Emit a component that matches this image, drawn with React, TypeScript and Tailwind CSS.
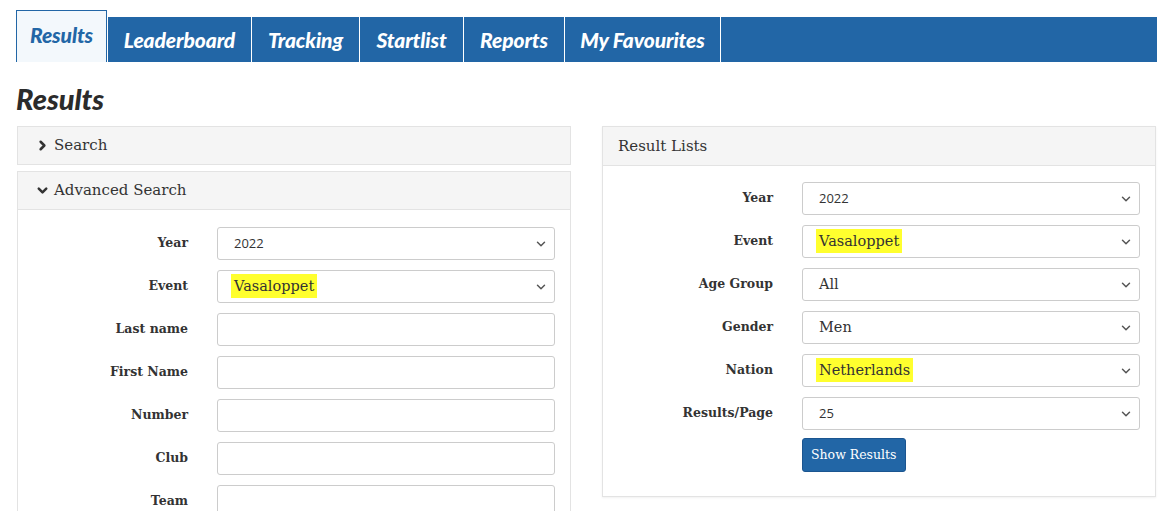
import { ChevronDown, ChevronRight } from "lucide-react";

const tabs = ["Results", "Leaderboard", "Tracking", "Startlist", "Reports", "My Favourites"];
const tabWidths = ["w-[91px]", "w-[145px]", "w-[108px]", "w-[104px]", "w-[101px]", "w-[156px]"];

const serif = { fontFamily: '"DejaVu Serif", "Liberation Serif", serif' };

function Mark({ children }: { children: React.ReactNode }) {
  return <span className="bg-[#ffff2e] px-[3px] py-[4px] -mx-[3px]">{children}</span>;
}

function Select({ value, sans }: { value: React.ReactNode; sans?: boolean }) {
  return (
    <div className="h-[33px] w-[338px] border border-[#cccccc] rounded-[3px] bg-white flex items-center justify-between pl-[16px] pr-[6px] text-[#333]">
      <span
        className={sans ? "text-[13px]" : "text-[14.5px]"}
        style={sans ? { fontFamily: '"Open Sans", sans-serif' } : serif}
      >
        {value}
      </span>
      <ChevronDown size={14} strokeWidth={2.5} className="text-[#555]" />
    </div>
  );
}

function Input() {
  return <div className="h-[33px] w-[338px] border border-[#cccccc] rounded-[3px] bg-white" />;
}

function Row({ label, children }: { label: string; children: React.ReactNode }) {
  return (
    <div className="flex items-center">
      <div className="w-[170px] text-right text-[12.5px] font-bold text-[#333]" style={serif}>
        {label}
      </div>
      <div className="ml-[29px]">{children}</div>
    </div>
  );
}

export default function App() {
  return (
    <div className="w-[1173px] h-[511px] bg-white overflow-hidden px-[16px] pt-[10px]">
      <div className="flex items-end h-[52px]">
        <div className="flex w-[1141px] h-[45px] bg-[#2266a6] items-stretch self-end relative">
          {tabs.map((t, i) => (
            <div
              key={t}
              className={
                i === 0
                  ? `${tabWidths[i]} -mt-[7px] h-[52px] bg-[#f3f8fc] border border-b-0 border-[#2266a6] flex items-center justify-center text-[#2266a6] pb-[3px]`
                  : `${tabWidths[i]} flex items-center justify-center text-white border-r border-white ${i === 1 ? "border-l" : ""}`
              }
            >
              <span
                className="text-[21px] italic font-black tracking-[-0.1px]"
                style={{ fontFamily: "Lato, sans-serif" }}
              >
                {t}
              </span>
            </div>
          ))}
        </div>
      </div>

      <h1
        className="mt-[20px] text-[29px] leading-[34px] italic font-black text-[#2b2b2b]"
        style={{ fontFamily: "Lato, sans-serif" }}
      >
        Results
      </h1>

      <div className="flex gap-[31px] mt-[10px]">
        <div className="w-[554px] ml-[1px]">
          <div className="h-[39px] bg-[#f5f5f5] border border-[#e3e3e3] flex items-center pl-[17px] text-[15px] text-[#333]" style={serif}>
            <ChevronRight size={15} strokeWidth={4} className="mr-[4px]" />
            Search
          </div>
          <div className="mt-[6px] border border-[#e3e3e3]">
            <div className="h-[38px] bg-[#f5f5f5] border-b border-[#e3e3e3] flex items-center pl-[17px] text-[15px] text-[#333]" style={serif}>
              <ChevronDown size={15} strokeWidth={4} className="mr-[4px]" />
              Advanced Search
            </div>
            <div className="pt-[17px] flex flex-col gap-[10px] pb-[20px]">
              <Row label="Year"><Select value="2022" sans /></Row>
              <Row label="Event"><Select value={<Mark>Vasaloppet</Mark>} /></Row>
              <Row label="Last name"><Input /></Row>
              <Row label="First Name"><Input /></Row>
              <Row label="Number"><Input /></Row>
              <Row label="Club"><Input /></Row>
              <Row label="Team"><Input /></Row>
            </div>
          </div>
        </div>

        <div className="w-[554px] self-start border border-[#e3e3e3] shadow-[0_1px_2px_rgba(0,0,0,0.06)]">
          <div className="h-[39px] bg-[#f5f5f5] border-b border-[#e3e3e3] flex items-center pl-[15px] text-[15px] text-[#333]" style={serif}>
            Result Lists
          </div>
          <div className="pt-[16px] pb-[24px] flex flex-col gap-[10px]">
            <Row label="Year"><Select value="2022" sans /></Row>
            <Row label="Event"><Select value={<Mark>Vasaloppet</Mark>} /></Row>
            <Row label="Age Group"><Select value="All" /></Row>
            <Row label="Gender"><Select value="Men" /></Row>
            <Row label="Nation"><Select value={<Mark>Netherlands</Mark>} /></Row>
            <Row label="Results/Page"><Select value="25" sans /></Row>
            <div className="ml-[199px] -mt-[2px]">
              <button
                className="h-[34px] px-[8px] bg-[#2266a6] border border-[#1b5590] rounded-[3px] text-white text-[12.5px]"
                style={serif}
              >
                Show Results
              </button>
            </div>
          </div>
        </div>
      </div>
    </div>
  );
}
